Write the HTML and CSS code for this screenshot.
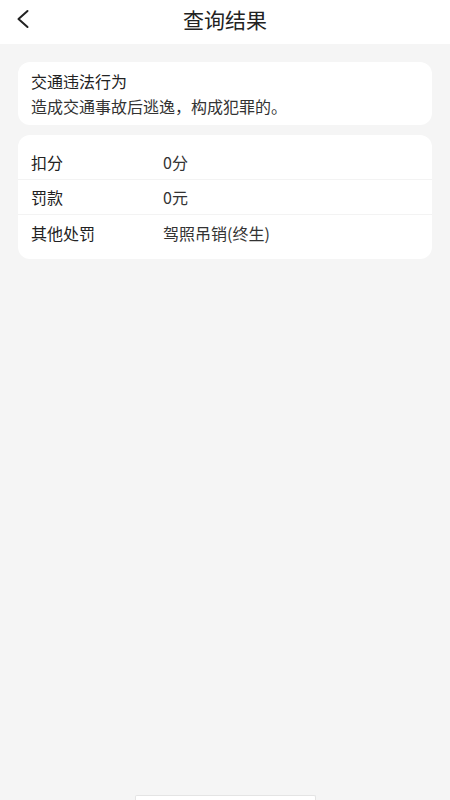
FILE: index.html
```html
<!DOCTYPE html>
<html lang="zh">
<head>
<meta charset="utf-8">
<link rel="stylesheet" href="styles.css">
</head>
<body>
<div class="page">
  <header class="topbar">
    <span class="back">
      <svg width="16" height="20" viewBox="0 0 16 20"><path d="M12.5 2 L3.5 10 L12.5 18" fill="none" stroke="#222" stroke-width="2" stroke-linecap="round" stroke-linejoin="round"/></svg>
    </span>
    <h1 class="title">查询结果</h1>
  </header>
  <main class="content">
    <section class="card intro">
      <div class="intro-title">交通违法行为</div>
      <div class="intro-text">造成交通事故后逃逸，构成犯罪的。</div>
    </section>
    <section class="card list">
      <div class="row"><span class="label">扣分</span><span class="value">0分</span></div>
      <div class="row"><span class="label">罚款</span><span class="value">0元</span></div>
      <div class="row last"><span class="label">其他处罚</span><span class="value">驾照吊销(终生)</span></div>
    </section>
  </main>
  <div class="home-indicator"></div>
</div>
</body>
</html>
```
FILE: styles.css
```css
* { box-sizing: border-box; }
html, body { margin: 0; padding: 0; }
body {
  background: #f5f5f5;
  font-family: "Noto Sans CJK SC", "Noto Sans", sans-serif;
  color: #222;
}
.page {
  width: 450px;
  height: 800px;
  position: relative;
  overflow: hidden;
}
.topbar {
  height: 44px;
  background: #fff;
  display: flex;
  align-items: center;
  justify-content: center;
  position: relative;
}
.back {
  position: absolute;
  left: 15px;
  top: 9px;
  width: 16px;
  height: 20px;
  display: flex;
}
.title {
  margin: 0;
  font-size: 21px;
  font-weight: 400;
  color: #222;
  line-height: 1;
  margin-top: -6px;
}
.content {
  padding: 18px 18px 0;
  display: flex;
  flex-direction: column;
  gap: 10px;
}
.card {
  background: #fff;
  border-radius: 12px;
}
.intro {
  padding: 8px 13px 8px;
  display: flex;
  flex-direction: column;
  gap: 3px;
}
.intro-title {
  font-size: 16px;
  font-weight: 400;
  line-height: 22px;
  color: #222;
}
.intro-text {
  font-size: 16px;
  line-height: 22px;
  color: #333;
}
.list {
  padding: 10px 0 8px;
}
.row {
  height: 35px;
  display: flex;
  align-items: center;
  padding-left: 13px;
  border-bottom: 1px solid #f3f3f3;
  font-size: 16px;
  color: #333;
}
.row.last { border-bottom: none; height: 36px; }
.label {
  width: 132px;
  font-weight: 400;
  color: #222;
}
.value { color: #333; }
.home-indicator {
  position: absolute;
  left: 135px;
  bottom: 0;
  width: 181px;
  height: 5px;
  background: #fff;
  border: 1px solid #e4e4e4;
  border-bottom: none;
  border-radius: 2px 2px 0 0;
}
```
